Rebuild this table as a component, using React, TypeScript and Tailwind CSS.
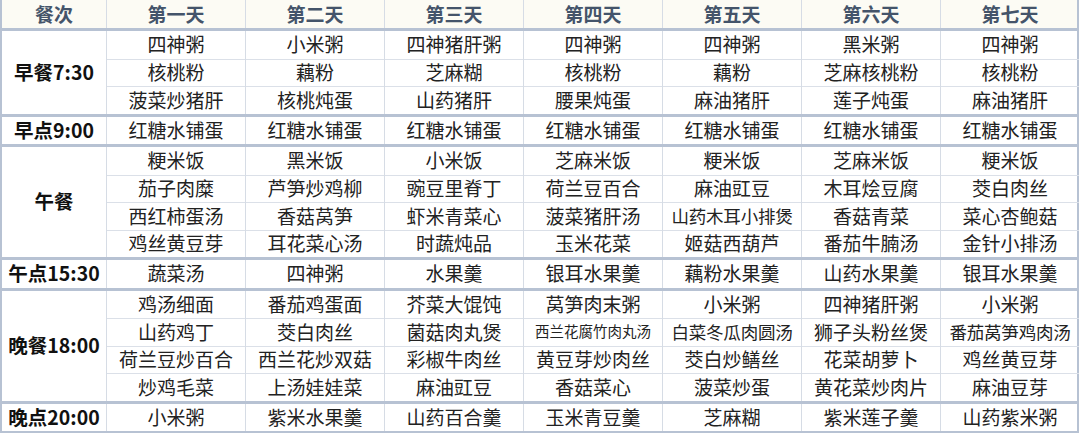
import React from "react";

const DAYS = ["第一天", "第二天", "第三天", "第四天", "第五天", "第六天", "第七天"];

type Section = { label: string; rows: string[][] };

const SECTIONS: Section[] = [
  {
    label: "早餐7:30",
    rows: [
      ["四神粥", "小米粥", "四神猪肝粥", "四神粥", "四神粥", "黑米粥", "四神粥"],
      ["核桃粉", "藕粉", "芝麻糊", "核桃粉", "藕粉", "芝麻核桃粉", "核桃粉"],
      ["菠菜炒猪肝", "核桃炖蛋", "山药猪肝", "腰果炖蛋", "麻油猪肝", "莲子炖蛋", "麻油猪肝"],
    ],
  },
  {
    label: "早点9:00",
    rows: [["红糖水铺蛋", "红糖水铺蛋", "红糖水铺蛋", "红糖水铺蛋", "红糖水铺蛋", "红糖水铺蛋", "红糖水铺蛋"]],
  },
  {
    label: "午餐",
    rows: [
      ["粳米饭", "黑米饭", "小米饭", "芝麻米饭", "粳米饭", "芝麻米饭", "粳米饭"],
      ["茄子肉糜", "芦笋炒鸡柳", "豌豆里脊丁", "荷兰豆百合", "麻油豇豆", "木耳烩豆腐", "茭白肉丝"],
      ["西红柿蛋汤", "香菇莴笋", "虾米青菜心", "菠菜猪肝汤", "山药木耳小排煲", "香菇青菜", "菜心杏鲍菇"],
      ["鸡丝黄豆芽", "耳花菜心汤", "时蔬炖品", "玉米花菜", "姬菇西葫芦", "番茄牛腩汤", "金针小排汤"],
    ],
  },
  {
    label: "午点15:30",
    rows: [["蔬菜汤", "四神粥", "水果羹", "银耳水果羹", "藕粉水果羹", "山药水果羹", "银耳水果羹"]],
  },
  {
    label: "晚餐18:00",
    rows: [
      ["鸡汤细面", "番茄鸡蛋面", "芥菜大馄饨", "莴笋肉末粥", "小米粥", "四神猪肝粥", "小米粥"],
      ["山药鸡丁", "茭白肉丝", "菌菇肉丸煲", "西兰花腐竹肉丸汤", "白菜冬瓜肉圆汤", "狮子头粉丝煲", "番茄莴笋鸡肉汤"],
      ["荷兰豆炒百合", "西兰花炒双菇", "彩椒牛肉丝", "黄豆芽炒肉丝", "茭白炒鳝丝", "花菜胡萝卜", "鸡丝黄豆芽"],
      ["炒鸡毛菜", "上汤娃娃菜", "麻油豇豆", "香菇菜心", "菠菜炒蛋", "黄花菜炒肉片", "麻油豆芽"],
    ],
  },
  {
    label: "晚点20:00",
    rows: [["小米粥", "紫米水果羹", "山药百合羹", "玉米青豆羹", "芝麻糊", "紫米莲子羹", "山药紫米粥"]],
  },
];

const font = { fontFamily: '"Noto Sans CJK SC", "Noto Sans", sans-serif' };

// long dish names are squeezed to fit the 139px column, like the sheet does
function sizeFor(text: string) {
  if (text.length >= 8) return "text-[14.5px]";
  if (text.length === 7) return "text-[17.5px] tracking-[-0.2px]";
  return "text-[19px]";
}

function MealSection({ section }: { section: Section }) {
  return (
    <div className="flex border-t-[3px] border-[#b7c2d3]">
      <div className="w-[104px] shrink-0 flex items-center justify-center pb-[2px] leading-none font-bold text-[19.5px] text-[#111]">
        {section.label}
      </div>
      {DAYS.map((_, d) => (
        <div key={d} className="w-[139px] shrink-0 flex flex-col border-l border-[#d6dce5]">
          {section.rows.map((row, r) => (
            <div
              key={r}
              className={`h-[27.5px] shrink-0 flex items-center justify-center pb-[2px] whitespace-nowrap leading-none text-[#222] ${sizeFor(row[d])} ${
                r > 0 ? "border-t border-[#dbe0e8]" : ""
              }`}
            >
              {row[d]}
            </div>
          ))}
        </div>
      ))}
    </div>
  );
}

export default function App() {
  return (
    <div className="w-[1080px] h-[433px] bg-white overflow-hidden" style={font}>
      <div className="w-[1079px] border-x-2 border-b-2 border-[#b7c2d3]">
        <div className="flex h-[28px] bg-[#fcfbf4]">
          <div className="w-[104px] shrink-0 flex items-center justify-center pb-[1px] leading-none font-bold text-[19px] text-[#44546a]">
            餐次
          </div>
          {DAYS.map((day) => (
            <div
              key={day}
              className="w-[139px] shrink-0 flex items-center justify-center pb-[1px] leading-none border-l border-[#d6dce5] font-bold text-[19px] text-[#44546a]"
            >
              {day}
            </div>
          ))}
        </div>
        {SECTIONS.map((s) => (
          <MealSection key={s.label} section={s} />
        ))}
      </div>
    </div>
  );
}
